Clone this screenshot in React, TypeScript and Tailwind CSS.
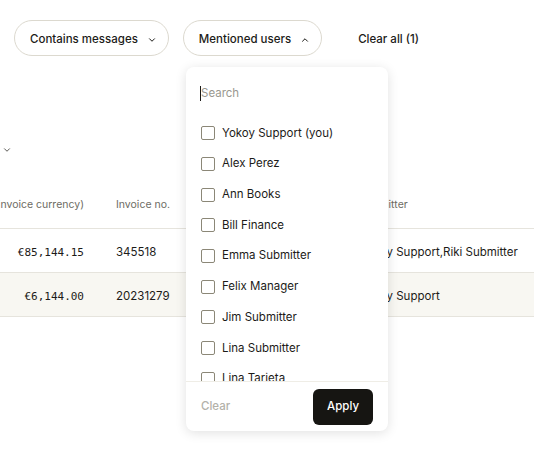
import { ChevronDown, ChevronUp } from 'lucide-react';

const users = [
  'Yokoy Support (you)',
  'Alex Perez',
  'Ann Books',
  'Bill Finance',
  'Emma Submitter',
  'Felix Manager',
  'Jim Submitter',
  'Lina Submitter',
  'Lina Tarieta',
];

const rows = [
  { amount: '€85,144.15', invoice: '345518', submitter: 'Yokoy Support,Riki Submitter', shaded: false },
  { amount: '€6,144.00', invoice: '20231279', submitter: 'Yokoy Support', shaded: true },
];

function FilterPill({ label, open }: { label: string; open?: boolean }) {
  return (
    <button className="flex items-center h-[36px] pt-[3px] pl-[15px] pr-[11px] gap-[9px] rounded-full border border-[#dcd9cf] bg-white text-[11.5px] font-medium text-[#1c1b18]">
      {label}
      {open ? (
        <ChevronUp size={10} strokeWidth={2.4} />
      ) : (
        <ChevronDown size={10} strokeWidth={2.4} />
      )}
    </button>
  );
}

function MentionedUsersMenu() {
  return (
    <div className="absolute left-[186px] top-[67px] w-[202px] h-[364px] flex flex-col bg-white rounded-[8px] shadow-[0_2px_12px_rgba(0,0,0,0.12)]">
      <div className="flex items-center h-[52px] pl-[14px] pt-[1px]">
        <span className="w-px h-[15px] bg-[#1c1b18]" />
        <span className="text-[11.5px] text-[#9a988f]">Search</span>
      </div>
      <div className="flex-1 overflow-hidden -mt-[1px]">
        {users.map((name) => (
          <div key={name} className="flex items-center h-[30.7px] pl-[15px] gap-[7px]">
            <span className="w-[14px] h-[14px] rounded-[2px] border border-[#8b8777] bg-white shrink-0" />
            <span className="text-[11.5px] text-[#1c1b18]">{name}</span>
          </div>
        ))}
      </div>
      <div className="flex items-center justify-between h-[50px] px-[15px] border-t border-[#efede6]">
        <span className="text-[11.5px] font-medium text-[#b3b1a9]">Clear</span>
        <button className="h-[36px] px-[14px] rounded-[6px] bg-[#161512] text-white text-[11.5px] font-medium">
          Apply
        </button>
      </div>
    </div>
  );
}

export default function App() {
  return (
    <div className="relative w-[534px] h-[454px] overflow-hidden bg-white font-['Inter',sans-serif] text-[#1c1b18]">
      <div className="flex items-center gap-[14px] pl-[14px] pt-[20px]">
        <FilterPill label="Contains messages" />
        <FilterPill label="Mentioned users" open />
        <span className="ml-[22px] pt-[3px] text-[11.5px] font-medium">Clear all (1)</span>
      </div>

      <div className="h-[125px] pt-[89px] pl-[2px]">
        <ChevronDown size={10} strokeWidth={2} className="text-[#3a3934]" />
      </div>

      <div className="w-[534px]">
        <div className="grid grid-cols-[100px_244px_1fr] items-center h-[48px] border-b border-[#e6e4dd] text-[10.5px] text-[#6d6b63]">
          <div className="flex justify-end pr-[16px] overflow-hidden whitespace-nowrap">
            <span>Amount (invoice currency)</span>
          </div>
          <div className="pl-[16px]">Invoice no.</div>
          <div className="pl-[16px]">Submitter</div>
        </div>
        {rows.map((r) => (
          <div
            key={r.invoice}
            className={`grid grid-cols-[100px_244px_1fr] items-center h-[44px] pt-[5px] border-b border-[#e6e4dd] text-[11.5px] ${r.shaded ? 'bg-[#f8f7f2]' : 'bg-white'}`}
          >
            <div className="text-right pr-[16px] font-['DejaVu_Sans_Mono',monospace] text-[11px]">{r.amount}</div>
            <div className="pl-[16px]">{r.invoice}</div>
            <div className="pl-[16px] whitespace-nowrap">{r.submitter}</div>
          </div>
        ))}
      </div>

      <MentionedUsersMenu />
    </div>
  );
}
